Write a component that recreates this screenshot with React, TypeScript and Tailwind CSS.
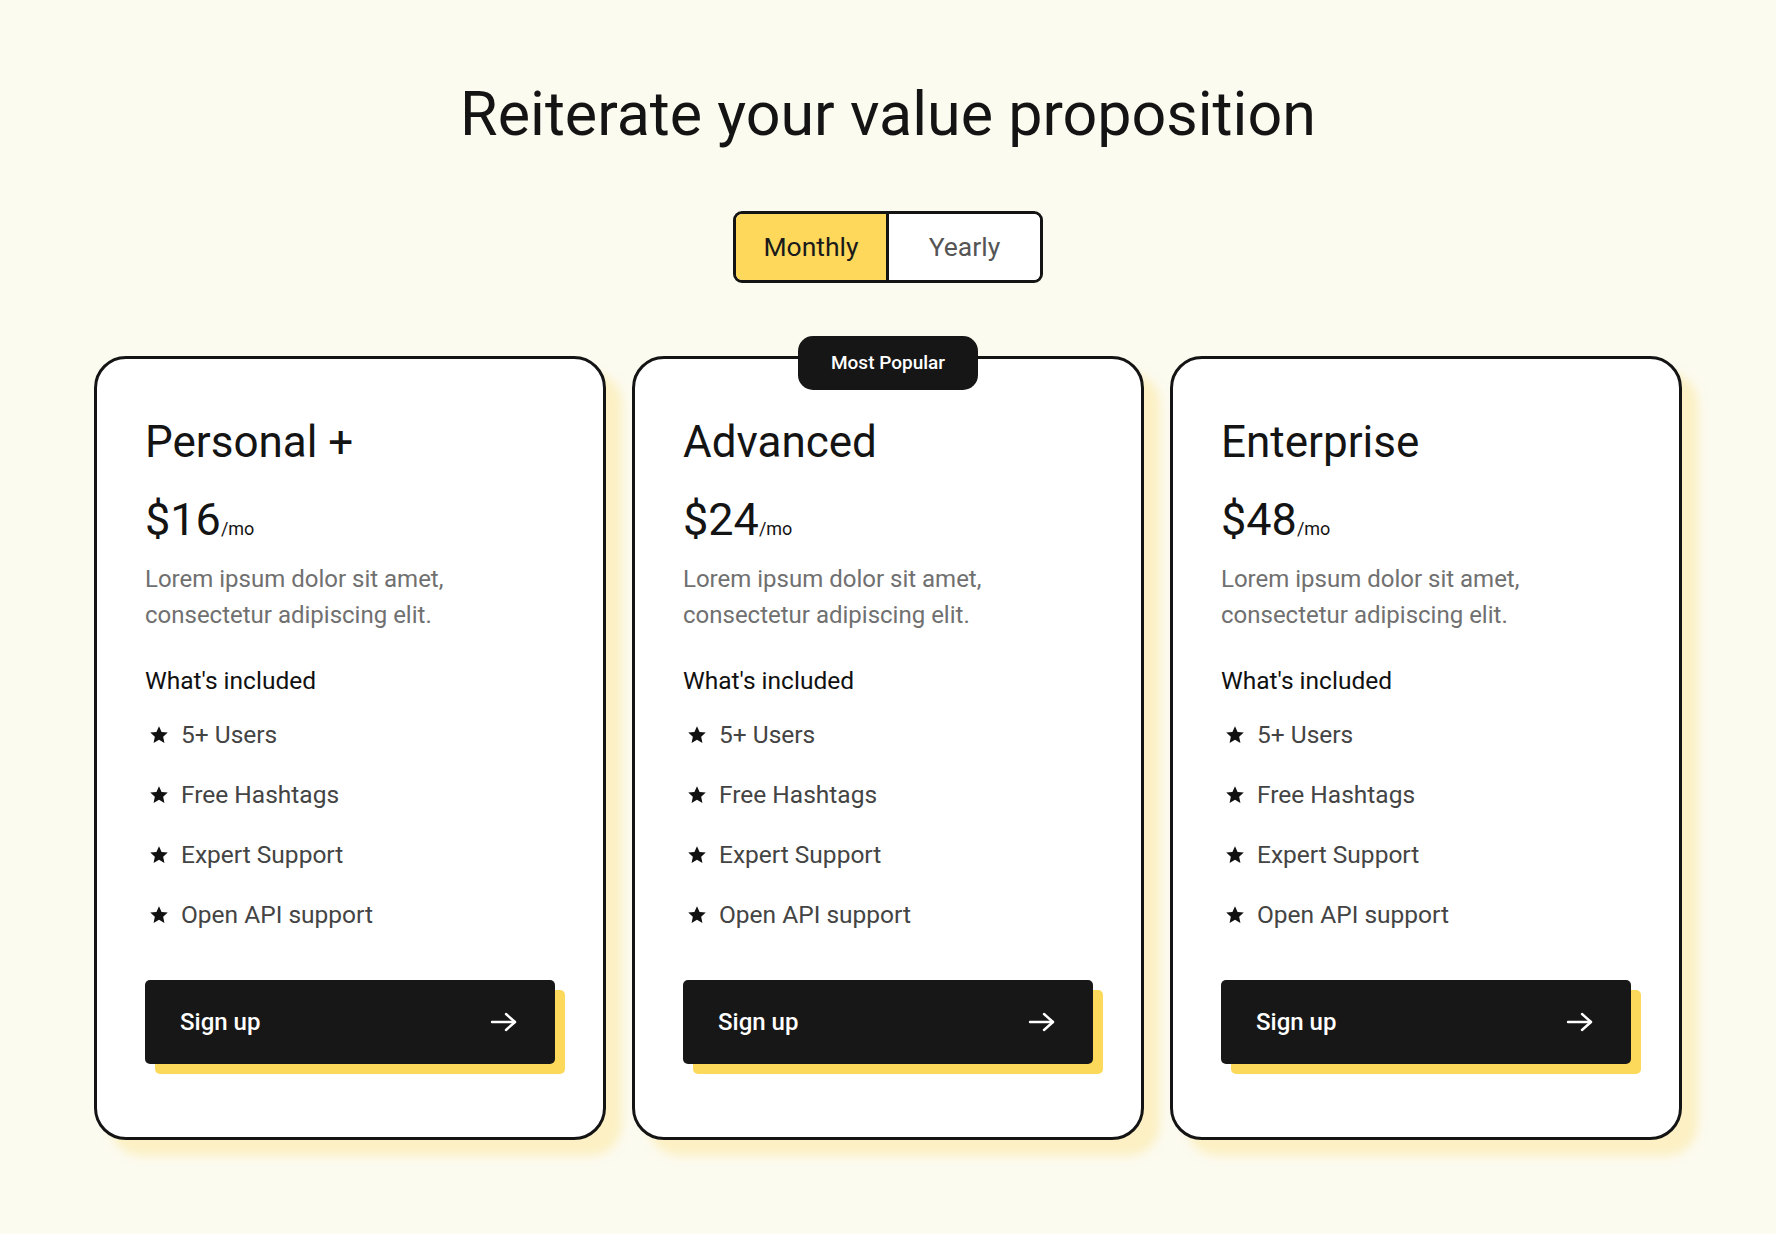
import React from "react";

const plans = [
  { name: "Personal +", price: "$16", popular: false },
  { name: "Advanced", price: "$24", popular: true },
  { name: "Enterprise", price: "$48", popular: false },
];

const features = ["5+ Users", "Free Hashtags", "Expert Support", "Open API support"];

function Star() {
  return (
    <svg width="20" height="20" viewBox="0 0 24 24" className="shrink-0">
      <polygon
        points="12,1.5 15.1,8.3 22.5,9.1 17,14.1 18.5,21.5 12,17.8 5.5,21.5 7,14.1 1.5,9.1 8.9,8.3"
        fill="#111111"
      />
    </svg>
  );
}

function Arrow() {
  return (
    <svg width="30" height="22" viewBox="0 0 30 22" fill="none" stroke="white" strokeWidth="2.4" strokeLinecap="round" strokeLinejoin="round">
      <line x1="3" y1="11" x2="26" y2="11" />
      <polyline points="17,3 26,11 17,19" />
    </svg>
  );
}

function Card({ name, price, popular }: { name: string; price: string; popular: boolean }) {
  return (
    <div className="relative w-[512px] h-[784px] rounded-[32px] border-[3px] border-[#141414] bg-white shadow-[16px_16px_10px_rgba(252,232,160,0.55)] px-[48px] pt-[58px] flex flex-col">
      {popular && (
        <div className="absolute left-1/2 -translate-x-1/2 -top-[23px] w-[180px] h-[54px] rounded-[15px] bg-[#161616] flex items-center justify-center text-white text-[19px] font-medium">
          Most Popular
        </div>
      )}
      <h2 className="text-[44px] leading-[50px] text-[#141414] font-normal">{name}</h2>
      <div className="mt-[28px] h-[50px] flex items-baseline text-[#141414]">
        <span className="text-[45px] leading-[50px]">{price}</span>
        <span className="text-[18px]">/mo</span>
      </div>
      <p className="mt-[16px] text-[24px] leading-[36px] text-[#707070]">
        Lorem ipsum dolor sit amet,
        <br />
        consectetur adipiscing elit.
      </p>
      <div className="mt-[32px] text-[24.5px] leading-[32px] text-[#111111]">What's included</div>
      <ul className="mt-[23px] flex flex-col gap-[30px]">
        {features.map((f) => (
          <li key={f} className="flex items-center h-[30px] pl-[4px]">
            <Star />
            <span className="ml-[12px] text-[24.5px] leading-[30px] text-[#444444]">{f}</span>
          </li>
        ))}
      </ul>
      <button className="mt-[50px] w-full h-[84px] rounded-[5px] bg-[#171717] shadow-[10px_10px_0_#fcd95b] flex items-center justify-between pl-[35px] pr-[36px] text-white text-[24px] font-medium">
        <span>Sign up</span>
        <Arrow />
      </button>
    </div>
  );
}

export default function App() {
  return (
    <div
      className="min-h-screen w-full bg-[#fcfbf0] flex flex-col items-center pt-[76px] pb-[80px]"
      style={{ fontFamily: "Roboto, 'Noto Sans', sans-serif" }}
    >
      <h1 className="text-[61px] leading-[76px] text-[#141414] font-normal">Reiterate your value proposition</h1>
      <div className="mt-[59px] flex h-[72px] w-[310px] rounded-[9px] border-[3px] border-[#141414] overflow-hidden">
        <button className="w-[153px] bg-[#fdd85b] border-r-[3px] border-[#141414] text-[26.5px] text-[#1a1a1a]">Monthly</button>
        <button className="flex-1 bg-white text-[26.5px] text-[#555555]">Yearly</button>
      </div>
      <div className="mt-[73px] flex gap-[26px]">
        {plans.map((p) => (
          <Card key={p.name} {...p} />
        ))}
      </div>
    </div>
  );
}
